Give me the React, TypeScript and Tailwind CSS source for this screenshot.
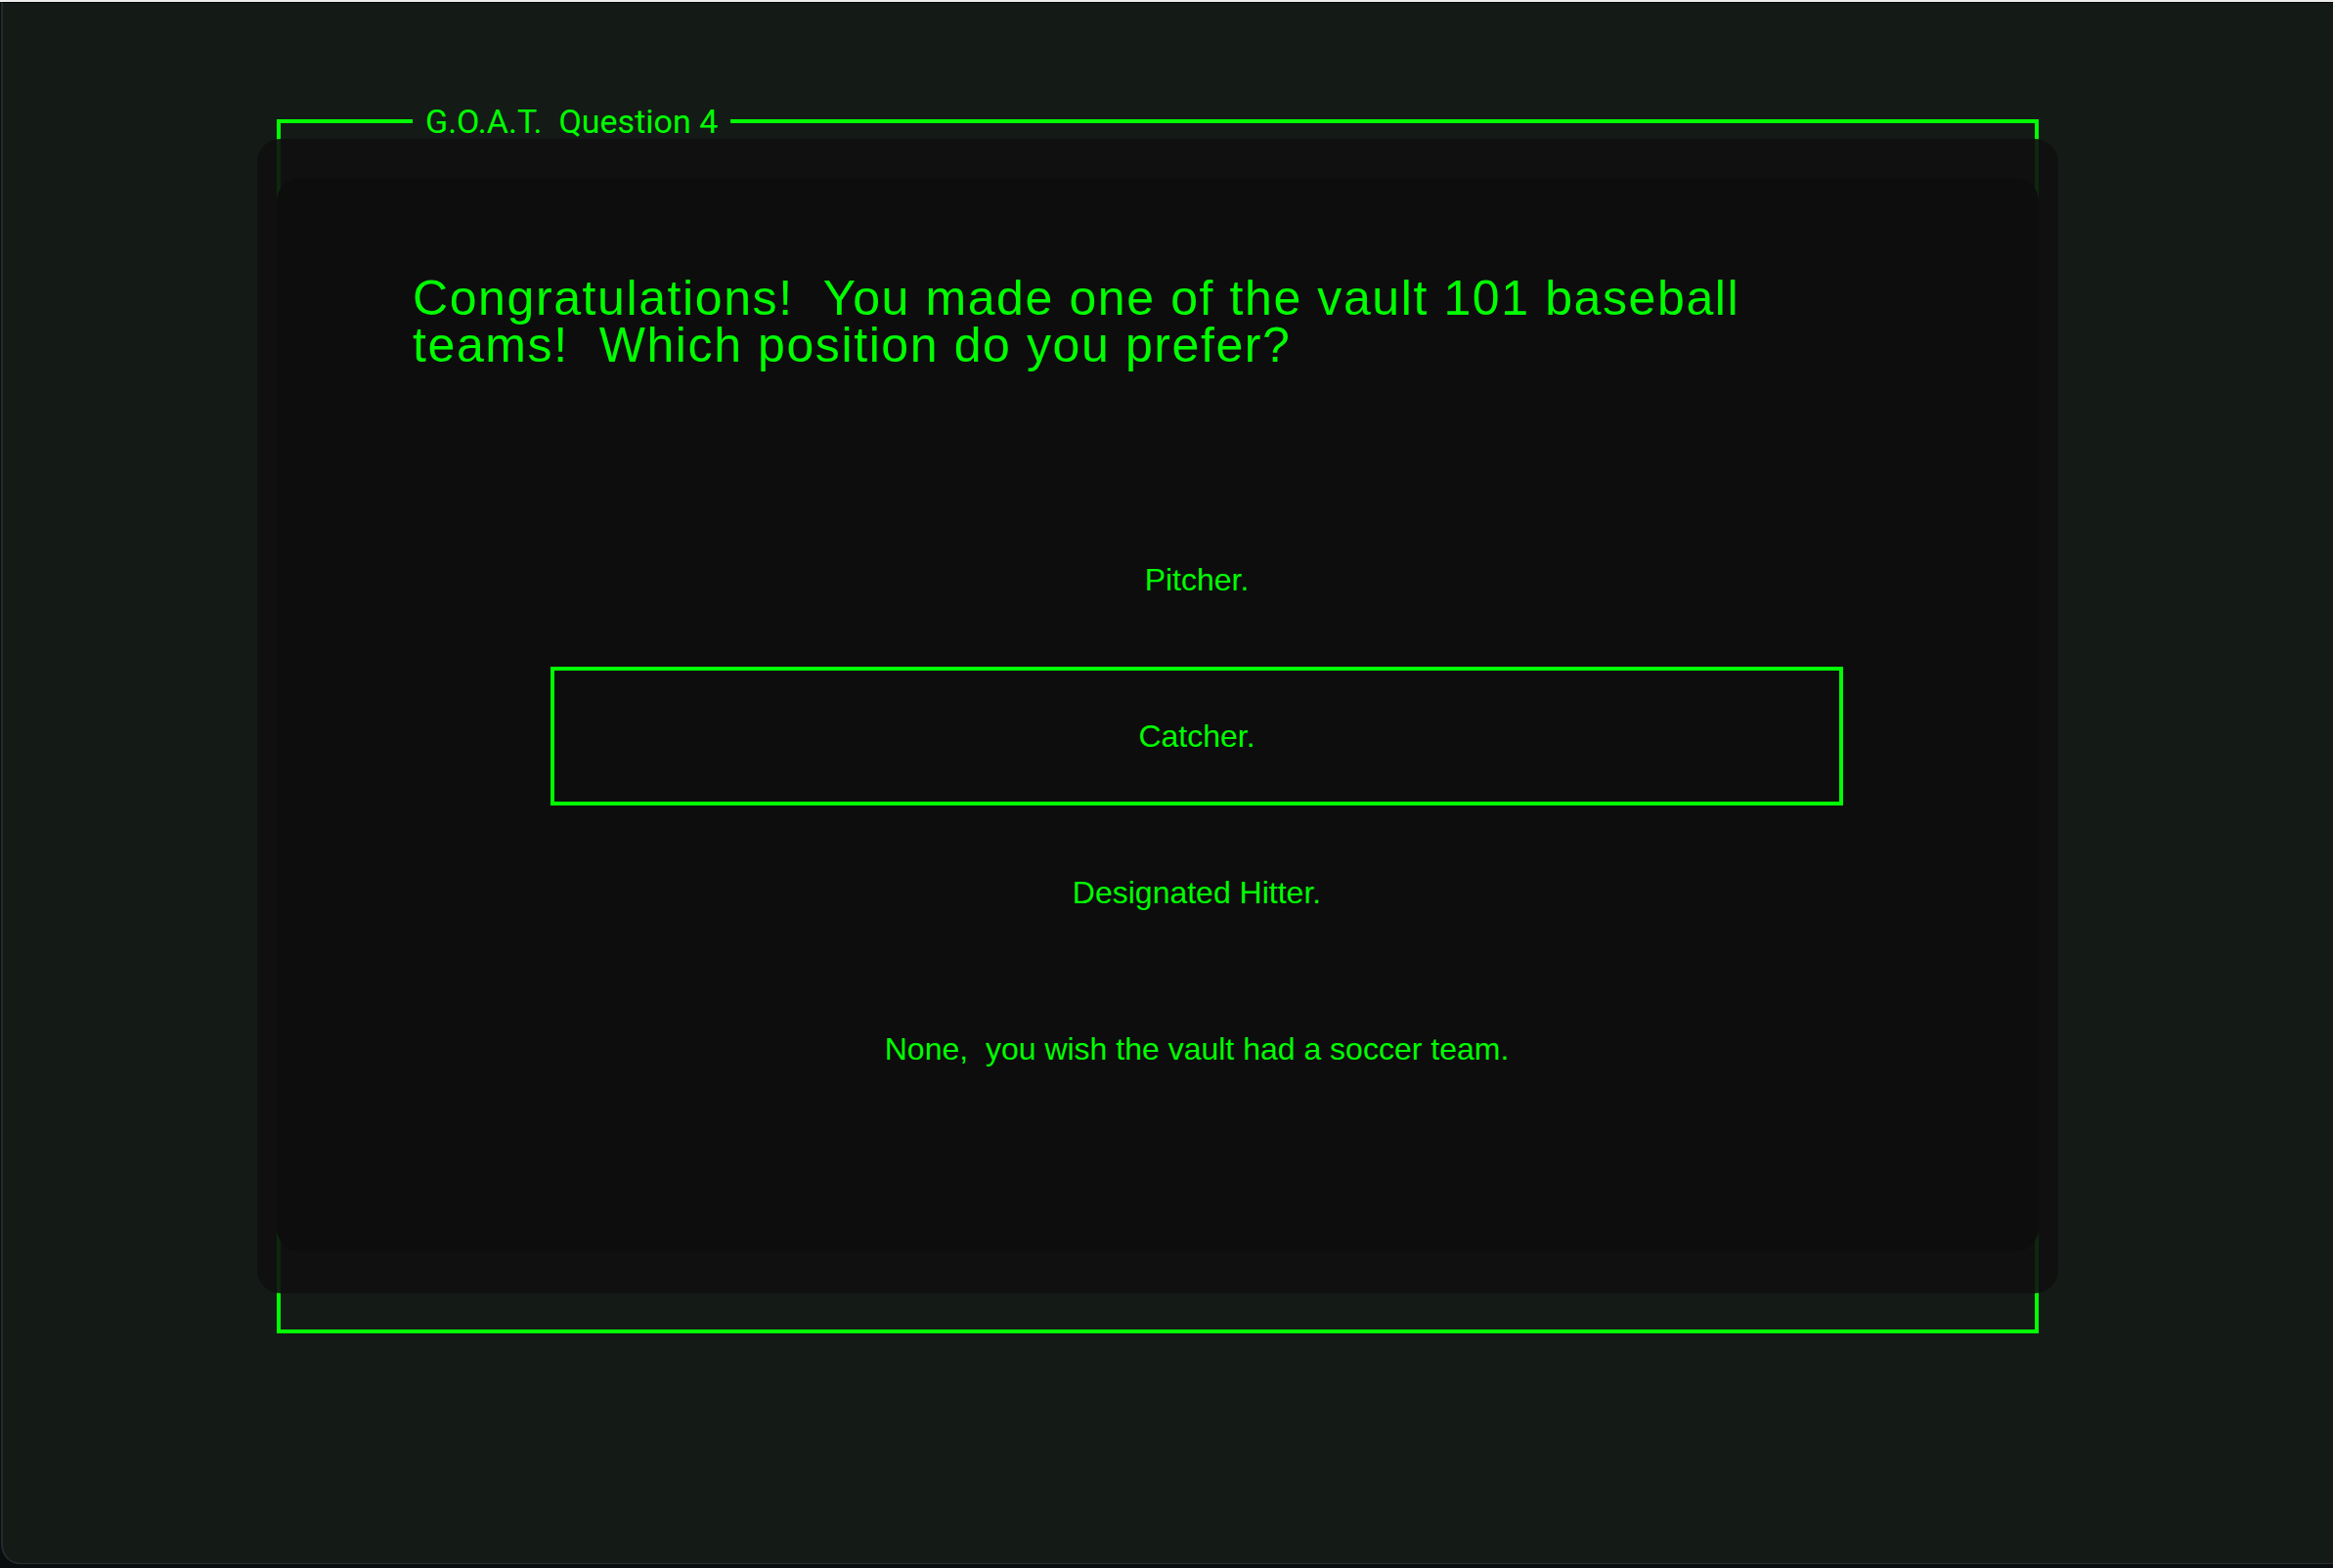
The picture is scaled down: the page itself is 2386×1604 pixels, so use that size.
import React from "react";

const options = [
  { label: "Pitcher.", selected: false },
  { label: "Catcher.", selected: true },
  { label: "Designated Hitter.", selected: false },
  { label: "None,\u00a0 you wish the vault had a soccer team.", selected: false },
];

export default function App() {
  return (
    <div className="w-[2386px] h-[1604px] bg-[#0a0d0f] border-t-2 border-[#ececec] overflow-hidden">
      <div className="h-[1598px] ml-[1px] border-t border-black border-l-2 border-l-[#252b2d] border-b border-b-[#2c3230] rounded-bl-[20px] bg-[#141b16] pt-[139px] pl-[260px]">
        <div className="relative w-[1842px] h-[1181px] pt-[40px] px-[20px]">
          {/* green frame */}
          <div className="absolute left-[20px] -top-[20px] w-[1802px] h-[1242px] border-4 border-[#00ff00]" />
          {/* legend */}
          <div
            className="absolute left-[159px] -top-[38px] h-[40px] leading-[40px] px-[13px] bg-[#141b16] text-[#00ff00] text-[34px] whitespace-pre"
            style={{ fontFamily: "Roboto, 'Liberation Sans', sans-serif" }}
          >
            {"G.O.A.T.  Question 4"}
          </div>
          {/* card translucent layer */}
          <div className="absolute inset-0 rounded-[24px] bg-[rgba(16,16,16,0.9)]" />
          {/* inner panel */}
          <div className="relative h-[1098px] rounded-[24px] bg-[#0d0d0d] pt-[99px]">
            <p
              className="ml-[139px] w-[1420px] text-[50px] leading-[48px] tracking-[1.6px] text-[#00ff00] whitespace-pre-wrap"
              style={{ fontFamily: "'Liberation Sans', Arial, sans-serif" }}
            >
              {"Congratulations!  You made one of the vault 101 baseball teams!  Which position do you prefer?"}
            </p>
            <div className="ml-[280px] w-[1322px] mt-[145px] flex flex-col gap-[18px]">
              {options.map((o) => (
                <div
                  key={o.label}
                  className={
                    "h-[142px] flex items-center justify-center text-[32px] text-[#00ff00] " +
                    (o.selected ? "border-4 border-[#00ff00]" : "border-4 border-transparent")
                  }
                  style={{ fontFamily: "'Liberation Sans', Arial, sans-serif" }}
                >
                  {o.label}
                </div>
              ))}
            </div>
          </div>
        </div>
      </div>
    </div>
  );
}
